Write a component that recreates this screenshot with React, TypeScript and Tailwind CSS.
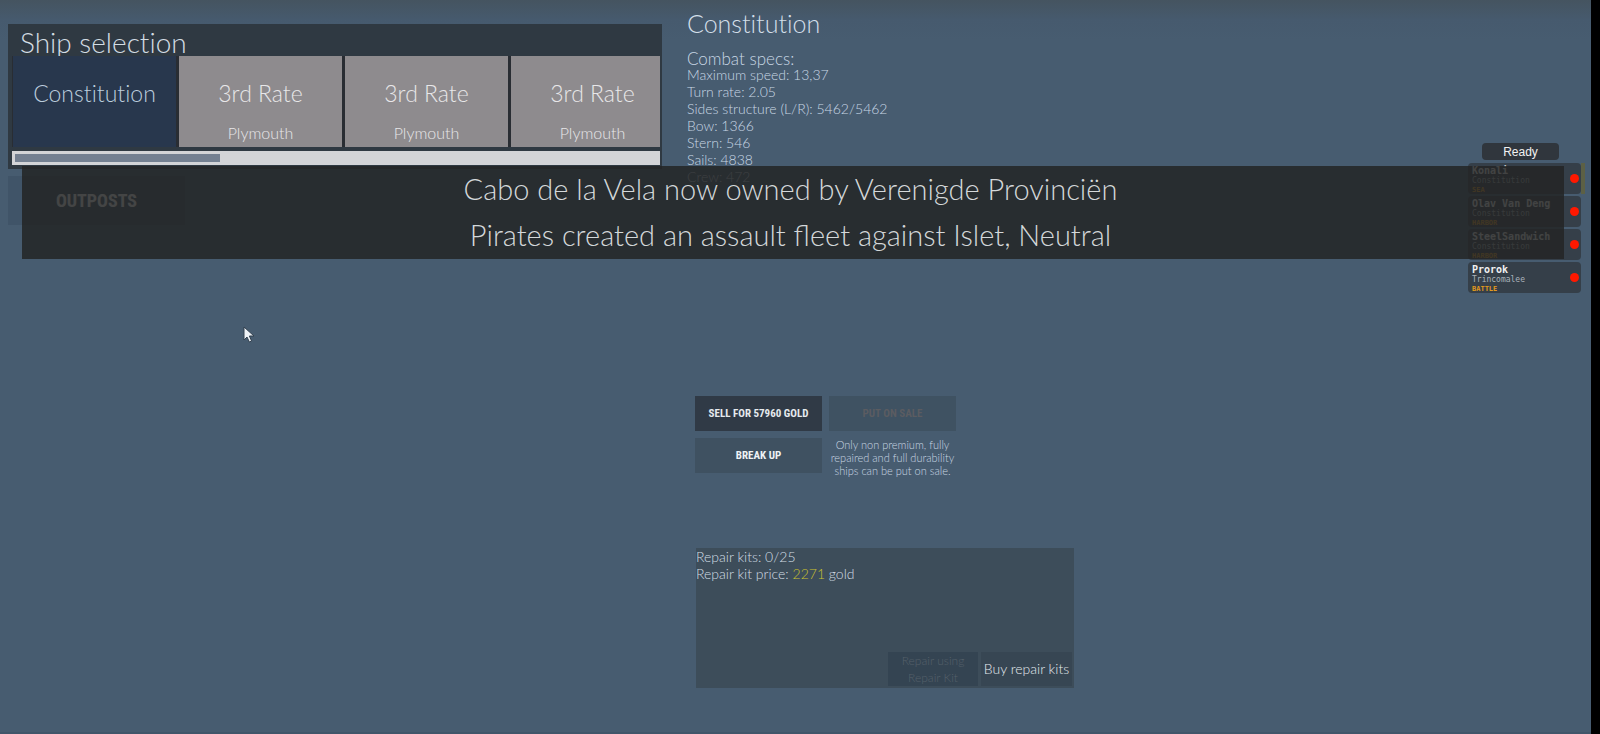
import clsx from 'clsx';

const ships = [
  { name: 'Constitution', port: '' },
  { name: '3rd Rate', port: 'Plymouth' },
  { name: '3rd Rate', port: 'Plymouth' },
  { name: '3rd Rate', port: 'Plymouth' },
];

const specs = [
  'Maximum speed: 13,37',
  'Turn rate: 2.05',
  'Sides structure (L/R): 5462/5462',
  'Bow: 1366',
  'Stern: 546',
  'Sails: 4838',
  'Crew: 472',
];

const fleet = [
  { name: 'Konali', ship: 'Constitution', status: 'SEA' },
  { name: 'Olav Van Deng', ship: 'Constitution', status: 'HARBOR' },
  { name: 'SteelSandwich', ship: 'Constitution', status: 'HARBOR' },
  { name: 'Prorok', ship: 'Trincomalee', status: 'BATTLE' },
];

function ShipSelection() {
  return (
    <section className="bg-[#2f3942] pr-[2px] pb-1 pl-1">
      <h2 className="h-8 overflow-hidden pl-2 text-[28px] leading-9 text-[#d3dde4] [font-variant-ligatures:none]">
        Ship selection
      </h2>
      <div className="flex gap-[3px] overflow-hidden bg-[#292d33] pl-px">
        {ships.map((ship, i) => (
          <button
            key={i}
            type="button"
            className={clsx(
              'flex h-[91px] w-[163px] shrink-0 flex-col items-center pt-[21px]',
              i === 0 ? 'bg-[#28374d] text-[#bccddd]' : 'bg-[#8e8b8e] text-[#e8e7e9]'
            )}
          >
            <span className="text-[23px] leading-8 [font-variant-ligatures:none]">{ship.name}</span>
            <span className="pt-3 text-base leading-6">{ship.port}</span>
          </button>
        ))}
      </div>
      <div className="mt-1 h-[14px] bg-[#d3d4d7] p-[3px]">
        <div className="h-2 w-[32%] bg-[#748091]" />
      </div>
    </section>
  );
}

function ShipDetails() {
  return (
    <section className="text-[#c8d7e5]">
      <h1 className="pt-[7px] text-[25px] leading-8 text-[#d3dfe9] [font-variant-ligatures:none]">Constitution</h1>
      <h2 className="pt-[13px] text-[17px] leading-[14px]">Combat specs:</h2>
      <ul className="text-sm leading-[17px]">
        {specs.map((line) => (
          <li key={line}>{line}</li>
        ))}
      </ul>
    </section>
  );
}

function SalePanel() {
  return (
    <section className="ml-2 grid w-[261px] grid-cols-2 gap-[7px] font-[Roboto_Condensed,Roboto,sans-serif] text-[11px] font-bold">
      <button type="button" className="h-[35px] bg-[#303a46] pt-px whitespace-nowrap text-[#e6eaee]">
        SELL FOR 57960 GOLD
      </button>
      <button type="button" disabled className="h-[35px] bg-[#3f5262] pt-px text-[#5b5c61]">
        PUT ON SALE
      </button>
      <button type="button" className="h-[35px] bg-[#3f5161] pt-px text-[#eef2f5]">
        BREAK UP
      </button>
      <p className="text-center font-[Lato,sans-serif] text-[11px] leading-[13px] font-light whitespace-nowrap text-[#c8d6e2]">
        Only non premium, fully
        <br />
        repaired and full durability
        <br />
        ships can be put on sale.
      </p>
    </section>
  );
}

function RepairPanel() {
  return (
    <section className="ml-[9px] flex h-[140px] flex-col justify-between bg-[#3d4d5a] text-sm leading-[17px] text-[#d2dde5]">
      <div>
        <p>Repair kits: 0/25</p>
        <p>
          Repair kit price: <span className="text-[#c8c030]">2271</span> gold
        </p>
      </div>
      <div className="flex justify-end gap-[3px] pr-[2px] pb-[2px]">
        <button type="button" disabled className="h-[34px] w-[90px] bg-[#344452] px-3 text-xs leading-[17px] text-[#54606a]">
          Repair using Repair Kit
        </button>
        <button type="button" className="h-[34px] w-[91px] bg-[#374653] pb-[2px] whitespace-nowrap text-[#e3eaef]">
          Buy repair kits
        </button>
      </div>
    </section>
  );
}

function FleetList() {
  return (
    <aside className="flex w-[117px] flex-col justify-self-end pt-[143px]">
      <button
        type="button"
        className="ml-[14px] h-[17px] w-[77px] rounded-sm bg-[#30363d] font-['Liberation_Sans',sans-serif] text-xs leading-4 font-normal text-[#f2f2f2]"
      >
        Ready
      </button>
      <ul className="mt-[3px] flex flex-col gap-[2px] font-['DejaVu_Sans_Mono',monospace] font-normal">
        {fleet.map((mate, i) => (
          <li key={mate.name} className="flex">
            <div className="flex h-[31px] w-[113px] items-center justify-between rounded-sm bg-[#353f49] pr-[2px] pl-1">
              <div className="pt-[2px] whitespace-nowrap">
                <p className="text-[10px] leading-[11px] font-bold text-[#f0f0f0]">{mate.name}</p>
                <p className="text-[8px] leading-[10px] text-[#aab3ba]">{mate.ship}</p>
                <p className="text-[7px] leading-[8px] font-bold text-[#e29a1c]">{mate.status}</p>
              </div>
              <span className="h-[9px] w-[9px] shrink-0 rounded-full bg-[#ff1800]" />
            </div>
            {i === 0 && <span className="h-[31px] w-1 bg-[#5c6045]" />}
          </li>
        ))}
      </ul>
    </aside>
  );
}

function NewsBanner() {
  return (
    <div className="absolute top-[166px] right-[27px] left-[22px] bg-[#232424]/85 pr-[5px] pb-px text-center text-[29px] leading-[46px] text-[#d4d8da]">
      <p>Cabo de la Vela now owned by Verenigde Provinciën</p>
      <p>Pirates created an assault fleet against Islet, Neutral</p>
    </div>
  );
}

function Cursor() {
  return (
    <svg className="absolute top-[326px] left-[243px] h-[18px] w-3" viewBox="0 0 12 18">
      <path d="M1 1v13l3-3 2.3 5 2.3-1-2.2-5H11z" fill="#eef2f6" stroke="#33414f" strokeWidth="1" />
    </svg>
  );
}

export default function App() {
  return (
    <div className="flex min-h-screen bg-black font-[Lato,sans-serif] font-light">
      <main className="relative flex-1 border-b-2 border-[#41566a] bg-[#475c70] bg-[linear-gradient(#455460,#465a6e_20px,#475c70_40px)] pr-[6px] pl-2">
        <div className="grid grid-cols-[654fr_387fr_486fr] gap-x-[25px]">
          <div className="min-w-0 pt-6">
            <ShipSelection />
            <button
              type="button"
              className="mt-[7px] h-[49px] w-[177px] bg-[#405468] pt-px font-[Roboto_Condensed,Roboto,sans-serif] text-lg font-bold text-white"
            >
              OUTPOSTS
            </button>
          </div>
          <div className="min-w-0">
            <ShipDetails />
            <div className="pt-[211px]">
              <SalePanel />
            </div>
            <div className="pt-[71px]">
              <RepairPanel />
            </div>
          </div>
          <FleetList />
        </div>
        <NewsBanner />
        <Cursor />
      </main>
      <div className="w-[9px] bg-black" />
    </div>
  );
}
